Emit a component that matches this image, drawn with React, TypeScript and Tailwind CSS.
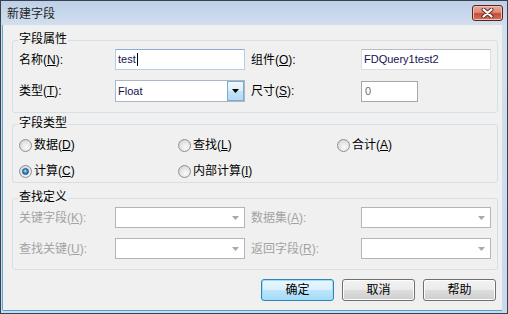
import React from "react";

function Tri({ color }: { color: string }) {
  return (
    <svg width="7" height="4" viewBox="0 0 7 4" className="block">
      <path d="M0 0 H7 L3.5 4 Z" fill={color} />
    </svg>
  );
}

function Lbl({ text, m, disabled }: { text: string; m: string; disabled?: boolean }) {
  return (
    <span className={"whitespace-nowrap leading-[14px] " + (disabled ? "text-[#a3a3a3]" : "text-black")}>
      {text}(<span className="underline underline-offset-[1px]">{m}</span>):
    </span>
  );
}

function Radio({ checked }: { checked?: boolean }) {
  return (
    <span className="w-[13px] h-[13px] rounded-full border border-[#8e9194] bg-[radial-gradient(circle_at_60%_65%,#fbfbfb_0%,#e2e2e2_55%,#c9c9c9_100%)] flex items-center justify-center shrink-0">
      {checked && (
        <span className="w-[7px] h-[7px] rounded-full border border-[#1b4f80] bg-[radial-gradient(circle_at_45%_40%,#b2e6ff_0%,#3a92d2_45%,#0d4f8c_100%)]" />
      )}
    </span>
  );
}

function RadioItem({ text, m, checked }: { text: string; m: string; checked?: boolean }) {
  return (
    <div className="flex items-center gap-[2px] h-[16px]">
      <Radio checked={checked} />
      <span className="leading-[14px] whitespace-nowrap">
        {text}(<span className="underline underline-offset-[1px]">{m}</span>)
      </span>
    </div>
  );
}

function Group({ title, className, children }: { title: string; className?: string; children: React.ReactNode }) {
  return (
    <div className={"ml-[9px] mr-[4px] border border-[#d5dfe5] rounded-[3px] px-[6px] " + (className ?? "")}>
      <div className="-mt-[9px] -ml-[1px] w-fit h-[14px] leading-[14px] bg-[#f0f0f0] px-[1px] text-black">{title}</div>
      {children}
    </div>
  );
}

function DisabledCombo() {
  return (
    <div className="h-[21px] border border-[#b5b5b5] bg-white flex items-center justify-end pr-[5px]">
      <Tri color="#a9a9a9" />
    </div>
  );
}

function Button({ text, def }: { text: string; def?: boolean }) {
  return (
    <div
      className={
        "w-[73px] h-[22px] rounded-[3px] border flex items-center justify-center leading-[14px] text-black " +
        (def
          ? "border-[#3c7fb1] bg-[linear-gradient(180deg,#eaf6fd_0%,#d9f0fc_50%,#bee6fd_50%,#a7d9f5_100%)] shadow-[inset_0_0_0_1px_#8ee4fb]"
          : "border-[#707070] bg-[linear-gradient(180deg,#f2f2f2_0%,#ebebeb_50%,#dddddd_50%,#cfcfcf_100%)] shadow-[inset_0_0_0_1px_#fcfcfc]")
      }
    >
      {text}
    </div>
  );
}

export default function App() {
  return (
    <div className="w-[508px] h-[314px] flex flex-col border border-[#3b4149] bg-[linear-gradient(180deg,#bcd0e8_0%,#d2dfee_8%,#c9daee_100%)] font-['Liberation_Sans','Noto_Sans_CJK_SC',sans-serif] text-[12px] text-black select-none">
      {/* Title bar */}
      <div className="h-[24px] shrink-0 flex items-start justify-between">
        <span className="ml-[6px] mt-[6px] leading-[14px] text-[#1f1f1f]">新建字段</span>
        <div className="mt-[4px] mr-[4px] w-[31px] h-[16px] rounded-[3px] border border-[#5b2219] bg-[linear-gradient(180deg,#e9a899_0%,#dc8a78_45%,#c64a36_55%,#d6735d_100%)] shadow-[inset_0_0_0_1px_#f0c2b5] flex items-center justify-center">
          <svg width="13" height="10" viewBox="0 0 13 10">
            <path d="M2.5 1.5 L10.5 8.5 M10.5 1.5 L2.5 8.5" stroke="#5a2a22" strokeWidth="4" strokeLinecap="round" />
            <path d="M2.5 1.5 L10.5 8.5 M10.5 1.5 L2.5 8.5" stroke="#ffffff" strokeWidth="2.2" strokeLinecap="round" />
          </svg>
        </div>
      </div>

      {/* Client area */}
      <div className="flex-1 ml-[2px] mr-[5px] mb-[3px] bg-[#f0f0f0] flex flex-col shadow-[0_1px_0_#3fa6d9,-1px_0_0_#5aa9d8]">
        {/* 字段属性 */}
        <Group title="字段属性" className="mt-[15px] pb-[10px]">
          <div className="mt-[3px] grid grid-cols-[96px_130px_116px_130px] items-center h-[21px]">
            <Lbl text="名称" m="N" />
            <div className="h-[21px] border border-[#b9cde2] border-t-[#8fadd0] bg-white flex items-center pl-[2px]">
              <span className="text-[11px] leading-[13px] text-[#141450]">test</span>
              <span className="w-[1px] h-[13px] bg-black ml-[1px]" />
            </div>
            <span className="pl-[6px]">
              <Lbl text="组件" m="O" />
            </span>
            <div className="h-[21px] border border-[#dadfe5] border-t-[#b6bcc4] bg-white flex items-center pl-[2px]">
              <span className="text-[11px] leading-[13px] text-[#141450]">FDQuery1test2</span>
            </div>
          </div>
          <div className="mt-[10px] grid grid-cols-[96px_130px_116px_130px] items-center h-[22px]">
            <Lbl text="类型" m="T" />
            <div className="h-[22px] border border-[#aab7c6] bg-white flex items-stretch">
              <div className="flex-1 flex items-center pl-[2px]">
                <span className="text-[11px] leading-[13px] text-[#141450]">Float</span>
              </div>
              <div className="w-[17px] border border-[#7fa9cf] bg-[linear-gradient(180deg,#eef7fd_0%,#dceffb_50%,#c3e2f6_50%,#b5dbf3_100%)] flex items-center justify-center">
                <Tri color="#000000" />
              </div>
            </div>
            <span className="pl-[6px]">
              <Lbl text="尺寸" m="S" />
            </span>
            <div className="w-[57px] h-[21px] border border-[#a8a8a8] bg-white flex items-center pl-[3px]">
              <span className="text-[11px] leading-[13px] text-[#6f6f6f]">0</span>
            </div>
          </div>
        </Group>

        {/* 字段类型 */}
        <Group title="字段类型" className="mt-[11px] pb-[3px]">
          <div className="mt-[7px] grid grid-cols-[159px_159px_1fr]">
            <RadioItem text="数据" m="D" />
            <RadioItem text="查找" m="L" />
            <RadioItem text="合计" m="A" />
          </div>
          <div className="mt-[10px] grid grid-cols-[159px_159px_1fr]">
            <RadioItem text="计算" m="C" checked />
            <RadioItem text="内部计算" m="I" />
          </div>
        </Group>

        {/* 查找定义 */}
        <Group title="查找定义" className="mt-[15px] pb-[10px]">
          <div className="mt-[3px] grid grid-cols-[96px_130px_116px_130px] items-center">
            <Lbl text="关键字段" m="K" disabled />
            <DisabledCombo />
            <span className="pl-[6px]">
              <Lbl text="数据集" m="A" disabled />
            </span>
            <DisabledCombo />
          </div>
          <div className="mt-[10px] grid grid-cols-[96px_130px_116px_130px] items-center">
            <Lbl text="查找关键" m="U" disabled />
            <DisabledCombo />
            <span className="pl-[6px]">
              <Lbl text="返回字段" m="R" disabled />
            </span>
            <DisabledCombo />
          </div>
        </Group>

        {/* Buttons */}
        <div className="mt-[9px] flex justify-end gap-[8px] pr-[6px]">
          <Button text="确定" def />
          <Button text="取消" />
          <Button text="帮助" />
        </div>
      </div>
    </div>
  );
}
